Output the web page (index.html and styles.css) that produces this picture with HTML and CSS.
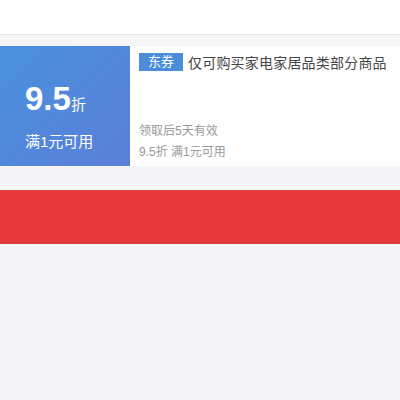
FILE: index.html
```html
<!DOCTYPE html>
<html lang="zh-CN">
<head>
    <meta charset="UTF-8">
    <meta name="viewport" content="width=device-width, initial-scale=1.0">
    <title>优惠券</title>
    <link rel="stylesheet" href="styles.css">
</head>
<body>
    <!-- 顶部栏 -->
    <div class="top-bar"></div>

    <!-- 优惠券卡片 -->
    <div class="coupon">
        <div class="coupon-left">
            <div class="discount">9.5<span>折</span></div>
            <div class="limit">满1元可用</div>
        </div>
        <div class="coupon-right">
            <div class="title">
                <span class="tag">东券</span>
                <span class="title-text">仅可购买家电家居品类部分商品</span>
            </div>
            <div class="meta">
                <p>领取后5天有效</p>
                <p>9.5折 满1元可用</p>
            </div>
        </div>
    </div>

    <!-- 领取按钮 -->
    <div class="red-bar"></div>
</body>
</html>
```
FILE: styles.css
```css
* {
    margin: 0;
    padding: 0;
    box-sizing: border-box;
    font-family: "Liberation Sans", "Noto Sans CJK SC", sans-serif;
}

body {
    background-color: #f5f5f7;
    color: #333;
}

.top-bar {
    height: 35px;
    background-color: #fff;
    border-bottom: 1px solid #e6e6ea;
}

.coupon {
    display: flex;
    height: 120px;
    margin-top: 11px;
    background-color: #fff;
}

.coupon-left {
    width: 130px;
    background: linear-gradient(135deg, #4a90de, #5a7fd8);
    color: #fff;
    padding: 35px 0 0 25px;
}

.discount {
    font-size: 33px;
    font-weight: bold;
    line-height: 36px;
}

.discount span {
    font-size: 15px;
    font-weight: normal;
}

.limit {
    font-size: 15px;
    margin-top: 7px;
}

.coupon-right {
    flex: 1;
    padding: 6px 0 0 9px;
    display: flex;
    flex-direction: column;
    justify-content: space-between;
}

.title {
    display: flex;
    align-items: center;
}

.tag {
    display: inline-block;
    width: 44px;
    height: 18px;
    line-height: 18px;
    text-align: center;
    background-color: #4a8dd8;
    color: #fff;
    font-size: 13px;
}

.title-text {
    margin-left: 5px;
    font-size: 14px;
    letter-spacing: 0.2px;
    color: #444;
}

.meta {
    padding-bottom: 3px;
}

.meta p {
    font-size: 12px;
    color: #999;
    line-height: 21px;
}

.red-bar {
    height: 54px;
    margin-top: 24px;
    background-color: #e9393e;
    border-top: 1px solid #d8444a;
    border-bottom: 2px solid #cf3f44;
}
```
